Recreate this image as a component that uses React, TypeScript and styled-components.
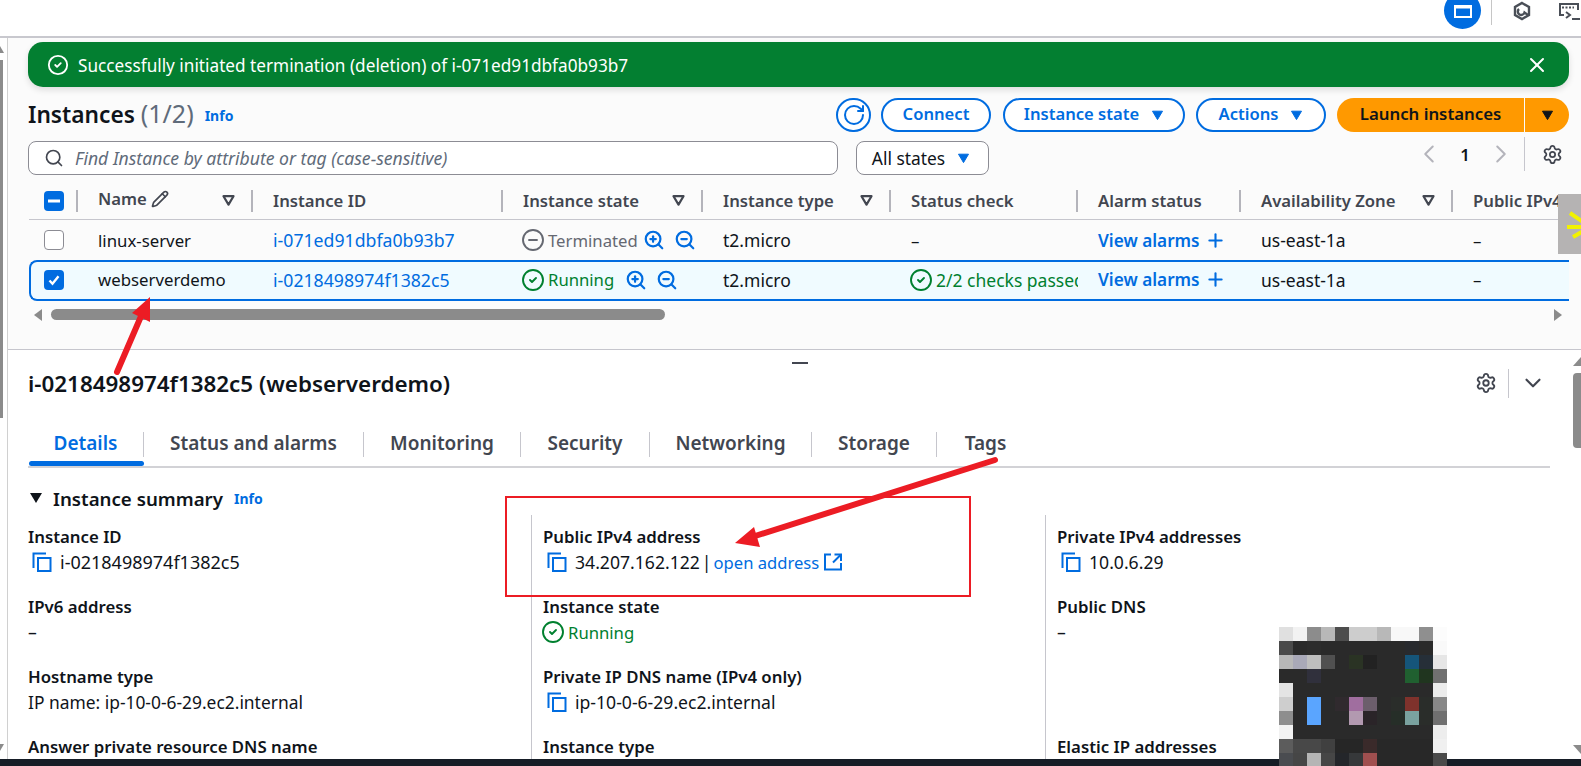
import React from "react";
import styled, { createGlobalStyle } from "styled-components";
import {
  ChevronDown,
  ChevronLeft,
  ChevronRight,
  CircleCheck,
  CircleMinus,
  Pencil,
  Plus,
  RotateCw,
  Search,
  Settings,
  X,
  ZoomIn,
  ZoomOut,
} from "lucide-react";

const blue = "#006ce0";
const green = "#00802f";
const ink = "#0f141a";
const line = "#c6c6cd";

const GlobalStyle = createGlobalStyle`
  html, body {
    margin: 0;
    padding: 0;
    background: #fff;
    overflow: hidden;
  }
  body {
    font-family: "Noto Sans", "Open Sans", sans-serif;
    font-size: 16.8px;
    color: ${ink};
  }
`;

const Page = styled.div`
  position: relative;
  display: flex;
  flex-direction: column;
  width: 1581px;
  height: 766px;
  overflow: hidden;
  background: #fff;
`;

const TopBar = styled.div`
  display: flex;
  justify-content: flex-end;
  align-items: flex-start;
  height: 36px;
  flex: none;
  border-bottom: 2px solid #c8c8ce;
  overflow: hidden;
`;

const WindowButton = styled.div`
  display: flex;
  align-items: center;
  justify-content: center;
  width: 37px;
  height: 37px;
  margin: -8px 10px 0 0;
  padding-top: 1px;
  box-sizing: border-box;
  border-radius: 50%;
  background: ${blue};
`;

const BarDivider = styled.div`
  width: 1px;
  height: 25px;
  background: #c6c6c6;
`;

const BarIcon = styled.div<{ $gap: number }>`
  margin-left: ${(p) => p.$gap}px;
  margin-top: 1px;
  height: 20px;
  color: #4a4f57;
`;

const Content = styled.div`
  display: flex;
  flex: 1;
  min-height: 0;
`;

const Gutter = styled.div`
  position: relative;
  width: 7px;
  flex: none;
  border-right: 1px solid #d0d0d0;
`;

const GutterThumb = styled.div`
  width: 3px;
  height: 358px;
  margin-top: 22px;
  background: #8b8b8b;
`;

const Main = styled.div`
  display: flex;
  flex-direction: column;
  flex: 1;
  min-width: 0;
`;

const ListPanel = styled.section`
  display: flex;
  flex-direction: column;
  height: 312px;
  flex: none;
  box-sizing: border-box;
  padding: 4px 12px 0 20px;
  background: #fbfbfb;
  border-bottom: 1px solid ${line};
`;

const Banner = styled.div`
  display: flex;
  align-items: center;
  height: 45px;
  flex: none;
  padding: 0 20px 0 19px;
  border-radius: 15px;
  background: #037f31;
  color: #fff;
  box-shadow: 0 3px 6px rgba(0, 0, 0, 0.12);
`;

const BannerText = styled.span`
  flex: 1;
  margin-left: 9px;
  padding-top: 1px;
  font-size: 17.2px;
`;

const ActionRow = styled.div`
  display: flex;
  align-items: center;
  height: 34px;
  margin-top: 11px;
  flex: none;
`;

const Title = styled.h1`
  margin: 0 0 2px;
  font-size: 22.7px;
  font-weight: 600;
  line-height: 32px;
`;

const Count = styled.span`
  font-size: 25px;
  font-weight: 400;
  color: #5f6b7a;
`;

const InfoLink = styled.a<{ $left: number }>`
  margin-left: ${(p) => p.$left}px;
  color: ${blue};
  font-size: 14px;
  font-weight: 700;
`;

const Spacer = styled.div`
  flex: 1;
`;

const OutlineButton = styled.button<{ $width: number; $left: number }>`
  display: flex;
  align-items: center;
  justify-content: center;
  gap: 12px;
  width: ${(p) => p.$width}px;
  height: 34px;
  margin-left: ${(p) => p.$left}px;
  padding: 0 0 3px;
  border: 2px solid ${blue};
  border-radius: 17px;
  background: #fff;
  color: ${blue};
  font: 600 16.6px "Noto Sans", sans-serif;

  svg {
    margin-top: 3px;
  }
`;

const LaunchButton = styled.button`
  width: 187px;
  height: 34px;
  margin-left: 11px;
  padding: 0 0 3px;
  border: 0;
  border-radius: 17px 0 0 17px;
  background: #ff9900;
  color: ${ink};
  font: 600 16.8px "Noto Sans", sans-serif;
`;

const LaunchCaret = styled.button`
  display: flex;
  align-items: center;
  justify-content: center;
  width: 44px;
  height: 34px;
  margin-left: 1px;
  padding: 0;
  border: 0;
  border-radius: 0 17px 17px 0;
  background: #ff9900;
`;

const FilterRow = styled.div`
  display: flex;
  align-items: center;
  height: 34px;
  margin-top: 9px;
  flex: none;
`;

const SearchBox = styled.div`
  display: flex;
  align-items: center;
  gap: 11px;
  width: 810px;
  height: 34px;
  box-sizing: border-box;
  padding-left: 15px;
  border: 1px solid #8c8c94;
  border-radius: 8px;
  background: #fff;
  color: #5f6b7a;
  font-style: italic;
  font-size: 17.6px;
`;

const StateSelect = styled.div`
  display: flex;
  align-items: center;
  justify-content: center;
  gap: 12px;
  width: 133px;
  height: 34px;
  box-sizing: border-box;
  margin-left: 18px;
  padding-right: 3px;
  border: 1px solid #8c8c94;
  border-radius: 8px;
  background: #fff;
  font-size: 17.4px;
`;

const Pager = styled.div`
  display: flex;
  align-items: center;
  height: 34px;
  margin-top: -8px;
  color: #b4b4bb;
`;

const PageNumber = styled.span`
  width: 42px;
  text-align: center;
  color: ${ink};
  font-weight: 600;
`;

const PagerSettings = styled.div`
  display: flex;
  align-items: center;
  height: 34px;
  margin-left: 8px;
  padding: 0 6px 0 17px;
  border-left: 1px solid ${line};
  color: #424650;
`;

const TableGrid = styled.div`
  display: grid;
  grid-template-columns: 49px 175px 250px 200px 188px 187px 163px 212px 116px;
  margin-top: 15px;
  flex: none;
  margin-left: 1px;
  overflow: hidden;
`;

const HeadRow = styled.div`
  display: contents;
`;

const HeadCell = styled.div<{ $last?: boolean }>`
  position: relative;
  display: flex;
  align-items: center;
  height: 30px;
  padding: 0 ${(p) => (p.$last ? 0 : 18)}px 8px 20px;
  box-sizing: border-box;
  border-bottom: 1px solid ${line};
  color: #424650;
  font-weight: 600;
  font-size: 16.7px;
  line-height: 20px;
  white-space: nowrap;
  overflow: hidden;

  &::after {
    content: "";
    display: ${(p) => (p.$last ? "none" : "block")};
    position: absolute;
    right: 0;
    top: 0;
    width: 2px;
    height: 22px;
    background: #b4b4bb;
  }
`;

const CheckHead = styled(HeadCell)`
  padding: 0 0 8px 15px;
`;

const HeadLabel = styled.span`
  flex: 1;
`;

const NameLabel = styled(HeadLabel)`
  display: flex;
  align-items: center;
  gap: 4px;
  margin-bottom: 3px;
  line-height: 18px;
`;

const Row = styled.div`
  display: contents;
`;

const Cell = styled.div<{ $selected?: boolean; $first?: boolean }>`
  display: flex;
  align-items: center;
  gap: 5px;
  height: ${(p) => (p.$selected ? 41 : 40)}px;
  box-sizing: border-box;
  padding-left: ${(p) => (p.$first ? 13 : 20)}px;
  padding-bottom: ${(p) => (p.$selected ? 2 : 0)}px;
  white-space: nowrap;
  overflow: hidden;
  background: ${(p) => (p.$selected ? "#f0fbff" : "transparent")};
  border-top: ${(p) => (p.$selected ? `2px solid ${blue}` : "0")};
  border-bottom: ${(p) => (p.$selected ? `2px solid ${blue}` : "0")};
  border-left: ${(p) => (p.$first ? `2px solid ${p.$selected ? blue : "transparent"}` : "0")};
  border-radius: ${(p) => (p.$selected && p.$first ? "8px 0 0 8px" : "0")};
`;

const Link = styled.a`
  color: ${blue};
`;

const IdLink = styled.a`
  color: ${blue};
  font-size: 17.7px;
`;

const NumberCell = styled.span`
  font-size: 17.5px;
`;

const BoldLink = styled.a`
  color: ${blue};
  font-weight: 600;
  font-size: 17.2px;
`;

const Check = styled.div<{ $on?: boolean }>`
  display: flex;
  align-items: center;
  justify-content: center;
  width: 20px;
  height: 20px;
  flex: none;
  box-sizing: border-box;
  border-radius: 4px;
  background: ${(p) => (p.$on ? blue : "#fff")};
  border: ${(p) => (p.$on ? "0" : "1px solid #8c8c94")};
`;

const Status = styled.span<{ $tone: string; $size?: number }>`
  display: inline-flex;
  align-items: center;
  gap: 3px;
  color: ${(p) => p.$tone};
  font-size: ${(p) => p.$size ?? 16.7}px;

  svg {
    flex: none;
    margin-left: -2px;
  }
`;

const HScroll = styled.div`
  display: flex;
  align-items: center;
  height: 11px;
  margin-top: 8px;
  flex: none;
`;

const HThumb = styled.div`
  width: 614px;
  height: 11px;
  margin-left: 8px;
  border-radius: 6px;
  background: #8b8b8b;
`;

const Details = styled.section`
  position: relative;
  flex: 1;
  min-height: 0;
  padding: 11px 31px 0 20px;
  overflow: hidden;
`;

const DragHandle = styled.div`
  position: absolute;
  left: 784px;
  top: 12px;
  width: 16px;
  height: 2px;
  background: #424650;
`;

const DetailsHead = styled.div`
  display: flex;
  align-items: center;
  height: 44px;
  padding-right: 4px;
`;

const DetailsTitle = styled.h2`
  flex: 1;
  margin: 0;
  font-size: 22.4px;
  font-weight: 600;
`;

const HeadDivider = styled.div`
  width: 1px;
  height: 29px;
  margin: 0 11px 0 11px;
  background: ${line};
`;

const Tabs = styled.div`
  display: flex;
  align-items: flex-start;
  height: 34px;
  margin-top: 27px;
  border-bottom: 2px solid #d2d2d6;
`;

const Tab = styled.div<{ $active?: boolean; $last?: boolean; $width: number }>`
  position: relative;
  display: flex;
  justify-content: center;
  box-sizing: border-box;
  width: ${(p) => p.$width}px;
  height: 25px;
  line-height: 23px;
  font-size: 19px;
  font-weight: 600;
  color: ${(p) => (p.$active ? blue : "#424650")};
  border-right: ${(p) => (p.$last ? "0" : `1px solid ${line}`)};

  &::after {
    content: "";
    display: ${(p) => (p.$active ? "block" : "none")};
    position: absolute;
    left: 1px;
    right: -1px;
    bottom: -9px;
    height: 5px;
    border-radius: 3px;
    background: ${blue};
  }
`;

const SummaryHead = styled.div`
  display: flex;
  align-items: center;
  height: 24px;
  margin-top: 18px;
  padding-left: 2px;
  font-size: 18.7px;
  font-weight: 600;
`;

const Caret = styled.span`
  width: 0;
  height: 0;
  margin-right: 11px;
  border-left: 6px solid transparent;
  border-right: 6px solid transparent;
  border-top: 10px solid ${ink};
`;

const Summary = styled.div`
  display: grid;
  grid-template-columns: 503px 514px 1fr;
  margin-top: 5px;
`;

const SummaryCol = styled.div<{ $ruled?: boolean }>`
  height: 260px;
  padding-left: ${(p) => (p.$ruled ? 11 : 0)}px;
  border-left: ${(p) => (p.$ruled ? `1px solid ${line}` : "0")};
`;

const Field = styled.div`
  height: 70px;
  padding-top: 11px;
  box-sizing: border-box;
`;

const FieldLabel = styled.div`
  height: 22px;
  line-height: 22px;
  font-weight: 600;
  font-size: 16.8px;
  white-space: nowrap;
`;

const FieldValue = styled.div<{ $size?: number }>`
  display: flex;
  align-items: center;
  height: 24px;
  margin-top: 2px;
  font-size: ${(p) => p.$size ?? 17.6}px;
  white-space: nowrap;
`;

const ValueLink = styled(Link)`
  font-size: 16.6px;
`;

const Pipe = styled.span`
  margin: 0 2px;
`;

const CopyWrap = styled.span`
  display: inline-flex;
  margin: 0 8px 0 4px;
`;

const Footer = styled.div`
  height: 7px;
  flex: none;
  background: #161d26;
`;

const VScroll = styled.div`
  position: absolute;
  right: 0;
  top: 373px;
  width: 8px;
  height: 75px;
  border-radius: 4px 0 0 4px;
  background: #8b8b8b;
`;

const ScrollArrow = styled.svg<{ $top: number; $left: number }>`
  position: absolute;
  left: ${(p) => p.$left}px;
  top: ${(p) => p.$top}px;
`;

const Widget = styled.div`
  position: absolute;
  right: 0;
  top: 194px;
  width: 23px;
  height: 60px;
  overflow: hidden;
  background: #b5b3b3;
`;

const RedBox = styled.div`
  position: absolute;
  left: 505px;
  top: 496px;
  width: 462px;
  height: 97px;
  border: 2px solid #ec1c24;
`;

const Overlay = styled.svg`
  position: absolute;
  left: 0;
  top: 0;
  pointer-events: none;
`;

const Blur = styled.svg`
  position: absolute;
  left: 1279px;
  top: 627px;
`;

function Triangle({ color, outline }: { color: string; outline?: boolean }) {
  return (
    <svg width="13" height="11" viewBox="0 0 13 11" style={{ flex: "none" }}>
      <path
        d="M1.5 1.2h10L6.5 9.6z"
        fill={outline ? "none" : color}
        stroke={color}
        strokeWidth={outline ? 2.2 : 1}
        strokeLinejoin="round"
      />
    </svg>
  );
}

function CopyIcon() {
  return (
    <svg width="20" height="20" viewBox="0 0 20 20" fill="none" stroke={blue} strokeWidth="2">
      <path d="M1.5 16V1.5H14" />
      <rect x="6" y="6" width="12.5" height="13" />
    </svg>
  );
}

function ExternalIcon() {
  return (
    <svg width="18" height="18" viewBox="0 0 18 18" fill="none" stroke={blue} strokeWidth="2" style={{ marginLeft: 5 }}>
      <path d="M7 1.5H1v15h16V10" />
      <path d="M10.5 1.5H17V8" />
      <path d="M16.5 2L9 9.5" />
    </svg>
  );
}

const PIXELS = [
  ["#e0e0e0", "#f2f2f2", "#8c8c8c", "#b8b8b8", "#4d4d4d", "#cdcdcd", "#cdcdcd", "#b8b8b8", "#f8f8f8", "#f8f8f8", "#8f8f8f", "#fcfcfc"],
  ["#4a4a4a", "#2a2a2a", "#2c2c2c", "#2a2a2a", "#2a2a2a", "#2a2a2a", "#2a2a2a", "#2a2a2a", "#2a2a2a", "#282a2e", "#2a2a2a", "#f9f9f9"],
  ["#b8b8b8", "#a9a9b8", "#bebebe", "#505050", "#2a2a2a", "#2a3324", "#222222", "#2a2a2a", "#2a2a2a", "#15557a", "#262f38", "#e6e6e6"],
  ["#2a2a2a", "#2a2a2a", "#30303c", "#2a2a2a", "#2a2a2a", "#2a2a2a", "#2a2a2a", "#2a2a2a", "#2a2a2a", "#206030", "#20351f", "#707070"],
  ["#e4e4e4", "#2a2a2a", "#2a2a2a", "#2a2a2a", "#2a2a2a", "#2a2a2a", "#2a2a2a", "#2a2a2a", "#2a2a2a", "#2a2a2a", "#2a2a2a", "#ececec"],
  ["#cecece", "#2a2a2a", "#5aa5ff", "#2a2a2a", "#302a2e", "#a06e9f", "#6c5e6c", "#2a2a2a", "#2a2d2a", "#7f322c", "#2a2d2a", "#888888"],
  ["#8e8e8e", "#2a2a2a", "#5aa5ff", "#2a2a2a", "#2a2a2a", "#b299b0", "#2a2428", "#2a2a2a", "#262e28", "#7aa29f", "#2a2d2a", "#707070"],
  ["#f2f2f2", "#2a2a2a", "#2a2a2a", "#2a2a2a", "#2a2a2a", "#2a2a2a", "#2a2a2a", "#2a2a2a", "#2a2a2a", "#2a2a2a", "#2a2a2a", "#ededed"],
  ["#5c5c5c", "#484848", "#484848", "#404040", "#262626", "#262626", "#3a2a2a", "#282828", "#282828", "#282828", "#282828", "#f0f0f0"],
  ["#4a4c50", "#464646", "#b5b5b5", "#464646", "#24262a", "#36383a", "#a04f4f", "#282828", "#282828", "#282828", "#282828", "#4a4a4a"],
];

const COLUMNS = [
  { label: "Instance ID", sort: false },
  { label: "Instance state", sort: true },
  { label: "Instance type", sort: true },
  { label: "Status check", sort: false },
  { label: "Alarm status", sort: false },
  { label: "Availability Zone", sort: true },
];

function InstanceRow(props: {
  name: string;
  id: string;
  selected?: boolean;
  state: React.ReactNode;
  check: React.ReactNode;
}) {
  const sel = props.selected;
  return (
    <Row>
      <Cell $first $selected={sel}>
        <Check $on={sel}>
          {sel && (
            <svg width="14" height="14" viewBox="0 0 14 14" fill="none" stroke="#fff" strokeWidth="2.4">
              <path d="M2.5 7.5l3 3.2 6-7.5" />
            </svg>
          )}
        </Check>
      </Cell>
      <Cell $selected={sel}>{props.name}</Cell>
      <Cell $selected={sel}>
        <IdLink>{props.id}</IdLink>
      </Cell>
      <Cell $selected={sel}>{props.state}</Cell>
      <Cell $selected={sel}>
        <NumberCell>t2.micro</NumberCell>
      </Cell>
      <Cell $selected={sel}>{props.check}</Cell>
      <Cell $selected={sel}>
        <BoldLink>View alarms</BoldLink>
        <Plus size={21} color={blue} strokeWidth={2.4} />
      </Cell>
      <Cell $selected={sel}>
        <NumberCell>us-east-1a</NumberCell>
      </Cell>
      <Cell $selected={sel}>–</Cell>
    </Row>
  );
}

function Zooms({ gap }: { gap: number }) {
  return (
    <>
      <ZoomIn size={22} color={blue} strokeWidth={2.4} style={{ marginLeft: gap, flex: "none" }} />
      <ZoomOut size={22} color={blue} strokeWidth={2.4} style={{ marginLeft: 4, flex: "none" }} />
    </>
  );
}

export default function App() {
  return (
    <Page>
      <GlobalStyle />
      <TopBar>
        <WindowButton>
          <svg width="18" height="13" viewBox="0 0 18 13">
            <rect width="18" height="13" fill="#fff" />
            <rect x="2" y="3.5" width="14" height="7.5" fill={blue} />
          </svg>
        </WindowButton>
        <BarDivider />
        <BarIcon $gap={20}>
          <svg width="20" height="20" viewBox="0 0 20 20" fill="none" stroke="#4a4f57" strokeWidth="2.4">
            <path d="M10 2l7 4v8l-7 4-7-4V6z" />
            <path d="M7 8a3.4 3.4 0 1 0 5.5 3.5L16 14" />
          </svg>
        </BarIcon>
        <BarIcon $gap={27}>
          <svg width="22" height="20" viewBox="0 0 22 20" fill="none" stroke="#4a4f57" strokeWidth="2">
            <path d="M5 14H1V3h18v6" />
            <path d="M3 6.5h12" strokeDasharray="2 1.5" />
            <path d="M7 11l4 3-4 3" />
            <path d="M13 18h8" />
          </svg>
        </BarIcon>
      </TopBar>
      <Content>
        <Gutter>
          <GutterThumb />
        </Gutter>
        <Main>
          <ListPanel>
            <Banner>
              <CircleCheck size={22} strokeWidth={2} />
              <BannerText>Successfully initiated termination (deletion) of i-071ed91dbfa0b93b7</BannerText>
              <X size={24} strokeWidth={2} />
            </Banner>
            <ActionRow>
              <Title>
                Instances <Count>(1/2)</Count>
              </Title>
              <InfoLink $left={11}>Info</InfoLink>
              <Spacer />
              <OutlineButton $width={35} $left={0}>
                <RotateCw size={24} strokeWidth={2} />
              </OutlineButton>
              <OutlineButton $width={110} $left={10}>Connect</OutlineButton>
              <OutlineButton $width={182} $left={12}>
                Instance state <Triangle color={blue} />
              </OutlineButton>
              <OutlineButton $width={130} $left={11}>
                Actions <Triangle color={blue} />
              </OutlineButton>
              <LaunchButton>Launch instances</LaunchButton>
              <LaunchCaret>
                <Triangle color={ink} />
              </LaunchCaret>
            </ActionRow>
            <FilterRow>
              <SearchBox>
                <Search size={20} color="#424650" strokeWidth={2} />
                Find Instance by attribute or tag (case-sensitive)
              </SearchBox>
              <StateSelect>
                All states <Triangle color={blue} />
              </StateSelect>
              <Spacer />
              <Pager>
                <ChevronLeft size={30} strokeWidth={1.6} />
                <PageNumber>1</PageNumber>
                <ChevronRight size={30} strokeWidth={1.6} />
                <PagerSettings>
                  <Settings size={21} strokeWidth={2} />
                </PagerSettings>
              </Pager>
            </FilterRow>
            <TableGrid>
              <HeadRow>
                <CheckHead>
                  <Check $on>
                    <svg width="12" height="4" viewBox="0 0 12 4">
                      <rect width="12" height="3" y="0.5" fill="#fff" />
                    </svg>
                  </Check>
                </CheckHead>
                <HeadCell>
                  <NameLabel>
                    Name <Pencil size={18} strokeWidth={2.2} />
                  </NameLabel>
                  <Triangle color="#424650" outline />
                </HeadCell>
                {COLUMNS.map((c) => (
                  <HeadCell key={c.label}>
                    <HeadLabel>{c.label}</HeadLabel>
                    {c.sort && <Triangle color="#424650" outline />}
                  </HeadCell>
                ))}
                <HeadCell $last>Public IPv4</HeadCell>
              </HeadRow>
              <InstanceRow
                name="linux-server"
                id="i-071ed91dbfa0b93b7"
                state={
                  <>
                    <Status $tone="#656871">
                      <CircleMinus size={24} strokeWidth={1.9} />
                      Terminated
                    </Status>
                    <Zooms gap={0} />
                  </>
                }
                check="–"
              />
              <InstanceRow
                selected
                name="webserverdemo"
                id="i-0218498974f1382c5"
                state={
                  <>
                    <Status $tone={green}>
                      <CircleCheck size={24} strokeWidth={1.9} />
                      Running
                    </Status>
                    <Zooms gap={6} />
                  </>
                }
                check={
                  <Status $tone={green} $size={17.5}>
                    <CircleCheck size={24} strokeWidth={1.9} />
                    2/2 checks passed
                  </Status>
                }
              />
            </TableGrid>
            <HScroll>
              <svg width="10" height="12" viewBox="0 0 10 12" style={{ marginLeft: 5 }}>
                <path d="M9 0v12L1 6z" fill="#8b8b8b" />
              </svg>
              <HThumb />
              <Spacer />
              <svg width="10" height="12" viewBox="0 0 10 12" style={{ marginRight: 6 }}>
                <path d="M1 0v12l8-6z" fill="#8b8b8b" />
              </svg>
            </HScroll>
          </ListPanel>
          <Details>
            <DragHandle />
            <DetailsHead>
              <DetailsTitle>i-0218498974f1382c5 (webserverdemo)</DetailsTitle>
              <Settings size={22} color="#424650" strokeWidth={2} />
              <HeadDivider />
              <ChevronDown size={26} color="#424650" strokeWidth={2} />
            </DetailsHead>
            <Tabs>
              <Tab $active $width={116}>Details</Tab>
              <Tab $width={220}>Status and alarms</Tab>
              <Tab $width={157}>Monitoring</Tab>
              <Tab $width={129}>Security</Tab>
              <Tab $width={162}>Networking</Tab>
              <Tab $width={125}>Storage</Tab>
              <Tab $width={97} $last>Tags</Tab>
            </Tabs>
            <SummaryHead>
              <Caret />
              Instance summary
              <InfoLink $left={11}>Info</InfoLink>
            </SummaryHead>
            <Summary>
              <SummaryCol>
                <Field>
                  <FieldLabel>Instance ID</FieldLabel>
                  <FieldValue $size={18}>
                    <CopyWrap><CopyIcon /></CopyWrap>
                    i-0218498974f1382c5
                  </FieldValue>
                </Field>
                <Field>
                  <FieldLabel>IPv6 address</FieldLabel>
                  <FieldValue>–</FieldValue>
                </Field>
                <Field>
                  <FieldLabel>Hostname type</FieldLabel>
                  <FieldValue $size={17.4}>IP name: ip-10-0-6-29.ec2.internal</FieldValue>
                </Field>
                <Field>
                  <FieldLabel>Answer private resource DNS name</FieldLabel>
                </Field>
              </SummaryCol>
              <SummaryCol $ruled>
                <Field>
                  <FieldLabel>Public IPv4 address</FieldLabel>
                  <FieldValue>
                    <CopyWrap><CopyIcon /></CopyWrap>
                    34.207.162.122<Pipe>|</Pipe><ValueLink>open address</ValueLink>
                    <ExternalIcon />
                  </FieldValue>
                </Field>
                <Field>
                  <FieldLabel>Instance state</FieldLabel>
                  <FieldValue>
                    <Status $tone={green}>
                      <CircleCheck size={24} strokeWidth={1.9} />
                      Running
                    </Status>
                  </FieldValue>
                </Field>
                <Field>
                  <FieldLabel>Private IP DNS name (IPv4 only)</FieldLabel>
                  <FieldValue>
                    <CopyWrap><CopyIcon /></CopyWrap>
                    ip-10-0-6-29.ec2.internal
                  </FieldValue>
                </Field>
                <Field>
                  <FieldLabel>Instance type</FieldLabel>
                </Field>
              </SummaryCol>
              <SummaryCol $ruled>
                <Field>
                  <FieldLabel>Private IPv4 addresses</FieldLabel>
                  <FieldValue>
                    <CopyWrap><CopyIcon /></CopyWrap>
                    10.0.6.29
                  </FieldValue>
                </Field>
                <Field>
                  <FieldLabel>Public DNS</FieldLabel>
                  <FieldValue>–</FieldValue>
                </Field>
                <Field />
                <Field>
                  <FieldLabel>Elastic IP addresses</FieldLabel>
                </Field>
              </SummaryCol>
            </Summary>
          </Details>
        </Main>
      </Content>
      <Footer />
      <ScrollArrow $left={0} $top={45} width="4" height="8" viewBox="0 0 4 8">
        <path d="M0 8V1l4 7z" fill="#8b8b8b" />
      </ScrollArrow>
      <ScrollArrow $left={0} $top={744} width="4" height="8" viewBox="0 0 4 8">
        <path d="M0 0h4L0 7z" fill="#8b8b8b" />
      </ScrollArrow>
      <VScroll />
      <ScrollArrow $left={1573} $top={357} width="8" height="9" viewBox="0 0 8 9">
        <path d="M0 9L8 0v9z" fill="#8b8b8b" />
      </ScrollArrow>
      <ScrollArrow $left={1573} $top={745} width="8" height="9" viewBox="0 0 8 9">
        <path d="M0 0h8v9z" fill="#8b8b8b" />
      </ScrollArrow>
      <Widget>
        <svg width="23" height="60" viewBox="0 0 23 60" stroke="#f2f200" strokeWidth="4">
          <path d="M12 19L25 28M9 33H24M15 43L27 36" />
        </svg>
      </Widget>
      <RedBox />
      <Overlay width="1581" height="766">
        <path d="M117 372L142 314" stroke="#ec1c24" strokeWidth="6" strokeLinecap="round" />
        <path d="M150 297L132 313L150 322z" fill="#ec1c24" />
        <path d="M995 460L752 537" stroke="#ec1c24" strokeWidth="6" strokeLinecap="round" />
        <path d="M735 543L754 527L760 547z" fill="#ec1c24" />
      </Overlay>
      <Blur width="168" height="140" shapeRendering="crispEdges">
        {PIXELS.map((row, y) =>
          row.map((c, x) => <rect key={`${x}-${y}`} x={x * 14} y={y * 14} width="14" height="14" fill={c} />)
        )}
      </Blur>
    </Page>
  );
}
